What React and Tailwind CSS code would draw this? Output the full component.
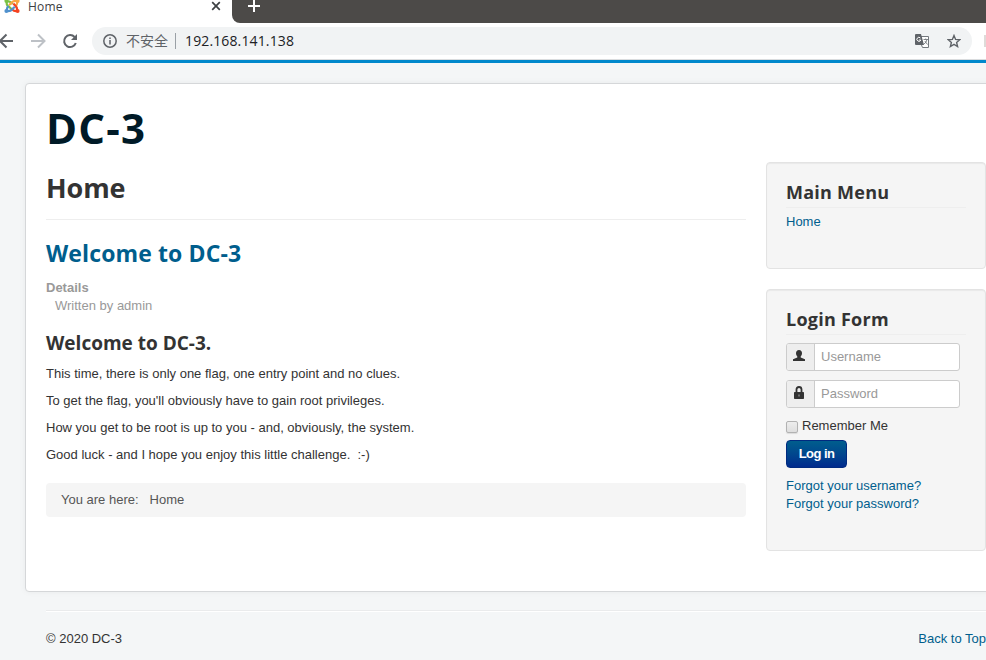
function JoomlaLogo() {
  return (
    <svg width="16" height="16" viewBox="0 0 16 16" fill="none">
      <g strokeWidth="2.2">
        <path d="M2.800 3.500Q2.200 8 5 8.700L7.500 11" stroke="#7ac143" />
        <path d="M3 3.500Q5.500 2.800 7 4.500L8.600 6" stroke="#7ac143" />
        <path d="M13 3Q9 2.600 7.800 4.500L5 7.300" stroke="#f9a541" />
        <path d="M13 3.500Q13.500 6.500 11.600 8" stroke="#f9a541" />
        <path d="M13 12.800Q13.500 9.500 11.500 7.800L9.300 5.600" stroke="#f44321" />
        <path d="M13 13Q10 13.400 8.600 11.800L7.400 10.500" stroke="#f44321" />
        <path d="M3 13Q2.600 9.600 4.600 8.200" stroke="#5091cd" />
        <path d="M3 13Q6.500 13.500 8 11.500L10.800 8.800" stroke="#5091cd" />
      </g>
      <circle cx="2.400" cy="3" r="2" fill="#7ac143" />
      <circle cx="13.600" cy="3" r="2" fill="#f9a541" />
      <circle cx="13.600" cy="13" r="2" fill="#f44321" />
      <circle cx="2.400" cy="13" r="2" fill="#5091cd" />
    </svg>
  );
}

function Browser() {
  return (
    <header className="h-[60px] bg-white font-['Open_Sans','Noto_Sans',sans-serif]">
      <div className="flex h-[23px] bg-white">
        <div className="flex w-[232px] shrink-0 items-start pl-1">
          <div className="-mt-[2px]"><JoomlaLogo /></div>
          <span className="ml-2 text-[12px] leading-[14px] tracking-[0.2px] text-[#3c4043]">Home</span>
          <svg className="mt-[1px] mr-[11px] ml-auto" width="10" height="10" viewBox="0 0 10 10" stroke="#3c4043" strokeWidth="1.700">
            <path d="M1.200 1.200l7.600 7.600M8.800 1.200L1.200 8.800" />
          </svg>
        </div>
        <div className="flex-1 rounded-bl-[8px] bg-[#4c4a48] pl-4">
          <svg width="12" height="12" viewBox="0 0 12 12" stroke="#fff" strokeWidth="2">
            <path d="M0 6h12M6 0v12" />
          </svg>
        </div>
      </div>
      <div className="flex h-[37px] items-center border-b border-[#dadcde]">
        <svg className="shrink-0" width="92" height="36" viewBox="0 0 92 36" fill="none" strokeWidth="2">
          <path d="M13 18H1M6.500 11.500L0 18l6.500 6.500" stroke="#5f6368" />
          <path d="M31 18h13M38 11.500l6.500 6.500-6.500 6.500" stroke="#bdc1c6" />
          <path d="M74.600 14A6 6 0 1 0 75.800 20" stroke="#5f6368" />
          <path d="M77 11v6h-6z" fill="#5f6368" />
        </svg>
        <div className="flex h-7 w-[880px] shrink-0 items-center rounded-full bg-[#f1f3f4] pl-[11px]">
          <svg width="14" height="14" viewBox="0 0 14 14" fill="none" stroke="#5f6368" strokeWidth="1.500">
            <circle cx="7" cy="7" r="6.200" />
            <path d="M7 6v4.500M7 3.500v1.500" />
          </svg>
          <span className="mt-[-2px] ml-[9px] w-[42px] font-['Noto_Sans_CJK_SC',sans-serif] text-[14px] leading-5 whitespace-nowrap text-[#5f6368]">不安全</span>
          <span className="ml-[7px] h-4 w-px bg-[#9aa0a6]" />
          <span className="ml-[9px] text-[14px] leading-5 tracking-[0.13px] text-[#202124]">192.168.141.138</span>
          <svg className="mr-[18px] ml-auto" width="14" height="14" viewBox="0 0 14 14">
            <path d="M6 2.500h7.500v11H7.500L6.500 11z" fill="#fff" stroke="#74797e" />
            <path d="M1 0h5l3 11H1q-1 0-1-1V1q0-1 1-1z" fill="#5f6368" />
            <path d="M5.400 4A2 2 0 1 0 5.800 6H4" fill="none" stroke="#fff" />
            <path d="M8.500 5.500H13M10.700 4.500v1M12 5.500q-.5 3-3 4.500M9.800 7l2.700 3.500" fill="none" stroke="#74797e" strokeWidth=".9" />
          </svg>
          <svg className="mr-[11px]" width="14" height="14" viewBox="0 0 14 14" fill="none" stroke="#5f6368" strokeWidth="1.400">
            <path d="M7 1.500l1.600 3.900 4.200.3-3.200 2.700 1 4.100L7 10.300l-3.600 2.200 1-4.100L1.200 5.700l4.200-.3z" />
          </svg>
        </div>
        <span className="ml-3 h-3 w-[2px] bg-[#dedbd9]" />
      </div>
    </header>
  );
}

function Card({ title, className, children }) {
  return (
    <section className={`w-[220px] rounded-[4px] border border-[#e3e3e3] bg-[#f5f5f5] px-[19px] pt-[18px] shadow-[inset_0_1px_1px_rgba(0,0,0,0.05)] ${className}`}>
      <h3 className="h-[27px] border-b border-[#eee] font-['Open_Sans','Noto_Sans',sans-serif] text-[18px] leading-[23px] font-bold tracking-[0.25px] text-[#333]">{title}</h3>
      {children}
    </section>
  );
}

function Field({ label, className, children }) {
  return (
    <div className={`flex h-7 w-[174px] overflow-hidden rounded-[3px] border border-[#ccc] bg-white ${className}`}>
      <div className="flex w-7 justify-center border-r border-[#ccc] bg-[#eee] pt-[6px] pr-[3px]">{children}</div>
      <span className="pl-[6px] text-[13px] leading-[25px] text-[#999]">{label}</span>
    </div>
  );
}

export default function App() {
  return (
    <div className="h-[660px] w-[986px] overflow-hidden bg-[#f4f6f7] font-['Liberation_Sans',Arial,sans-serif] text-[13px] leading-[18px] text-[#333]">
      <Browser />
      <div className="h-[3px] bg-[#0088cc]" />
      <div className="mt-5 ml-[25px] h-[509px] w-[1000px] rounded-[4px] border border-[#d5d7d9] bg-white pl-5 shadow-[0_0_6px_rgba(0,0,0,0.05)]">
        <h1 className="h-[78px] pt-[19px] font-['Open_Sans','Noto_Sans',sans-serif] text-[42px] leading-[50px] font-bold tracking-[1.2px] text-[#001a27]">DC-3</h1>
        <div className="flex">
          <main className="w-[700px]">
            <h2 className="h-[58px] border-b border-[#eee] pt-[8px] font-['Open_Sans','Noto_Sans',sans-serif] text-[27px] leading-[36px] font-bold tracking-[-0.1px]">Home</h2>
            <h2 className="mt-[16px] font-['Open_Sans','Noto_Sans',sans-serif] text-[23px] leading-[34px] font-bold tracking-[0.12px] text-[#005e8d]">Welcome to DC-3</h2>
            <div className="mt-[9px] text-[#999]">
              <p className="font-bold">Details</p>
              <p className="pl-[9px]">Written by admin</p>
            </div>
            <h3 className="mt-[16px] font-['Open_Sans','Noto_Sans',sans-serif] text-[19px] leading-[25px] font-bold">Welcome to DC-3.</h3>
            <div className="mt-[9px] flex flex-col gap-[9px] whitespace-pre">
              <p>This time, there is only one flag, one entry point and no clues.</p>
              <p>To get the flag, you'll obviously have to gain root privileges.</p>
              <p>How you get to be root is up to you - and, obviously, the system.</p>
              <p>Good luck - and I hope you enjoy this little challenge.  :-)</p>
            </div>
            <div className="mt-[19px] flex h-[34px] rounded-[4px] bg-[#f5f5f5] pt-[8px] pl-[15px] text-[#555]">
              <span>You are here:</span>
              <span className="ml-[11px]">Home</span>
            </div>
          </main>
          <aside className="ml-5">
            <Card title="Main Menu" className="h-[107px]">
              <p className="mt-[5px] text-[#005e8d]">Home</p>
            </Card>
            <Card title="Login Form" className="mt-5 h-[262px]">
              <Field label="Username" className="mt-2">
                <svg width="12" height="12" viewBox="0 0 12 12" fill="#333">
                  <path d="M6 0c2 0 3 1.300 3 3.200 0 1.500-.7 2.500-1.300 3.200v1.100L12 9.300V11H0V9.300l4.300-1.800V6.400C3.700 5.700 3 4.700 3 3.200 3 1.300 4 0 6 0z" />
                </svg>
              </Field>
              <Field label="Password" className="mt-[9px]">
                <svg className="-mt-px" width="12" height="13" viewBox="0 0 12 13">
                  <path d="M3.500 6V3.500Q3.500 1 6 1t2.500 2.500V6" fill="none" stroke="#333" strokeWidth="1.800" />
                  <rect x="1" y="6" width="10" height="7" rx=".7" fill="#333" />
                  <path d="M6 8.500v2" stroke="#aaa" />
                </svg>
              </Field>
              <div className="mt-[9px] flex h-[18px] items-start">
                <span className="mt-1 h-3 w-3 rounded-[2px] border border-[#b2b2b2] bg-linear-to-b from-[#ededed] to-[#dedede] shadow-[0_1px_1px_rgba(0,0,0,0.1)]" />
                <span className="ml-1">Remember Me</span>
              </div>
              <button className="mt-[5px] block h-7 w-[61px] rounded-[4px] border border-[#002a80] bg-linear-to-b from-[#005e8d] to-[#002a8d] text-[13px] leading-[24px] font-bold tracking-[-0.55px] text-white">Log in</button>
              <div className="mt-[9px] text-[#005e8d]">
                <p>Forgot your username?</p>
                <p>Forgot your password?</p>
              </div>
            </Card>
          </aside>
        </div>
      </div>
      <footer className="mt-[18px] ml-[46px] w-[940px] border-t border-[#eaebec]">
        <div className="flex justify-between border-t border-white pt-[18px]">
          <span>© 2020 DC-3</span>
          <span className="text-[#005e8d]">Back to Top</span>
        </div>
      </footer>
    </div>
  );
}
